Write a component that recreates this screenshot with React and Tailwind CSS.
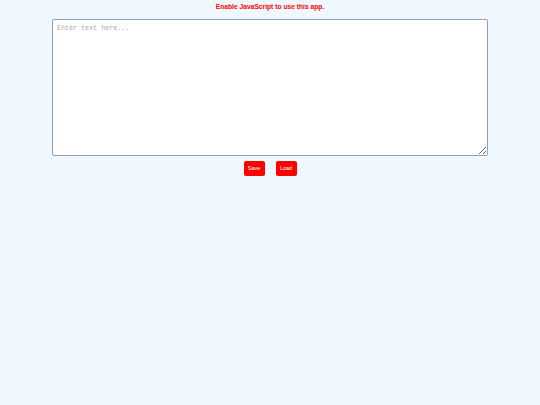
export default function App() {
  return (
    <div className="min-h-[405px] w-[540px] bg-[#f0f8ff] flex flex-col items-center" style={{ fontFamily: '"Liberation Sans", Arial, sans-serif' }}>
      <p className="text-[6.7px] font-bold text-[#ff0000] leading-none mt-[4px] h-[15px]">Enable JavaScript to use this app.</p>
      <textarea
        placeholder="Enter text here..."
        className="w-[436px] h-[137px] bg-white border border-[#9898c0] rounded-[2px] px-[4px] py-[4px] text-[6.7px] leading-[8px] outline-none placeholder:text-[#a9a9a9] resize-y"
        style={{ fontFamily: '"Liberation Mono", "Courier New", monospace' }}
      />
      <div className="flex gap-[11px] mt-[5px]">
        <button className="w-[21px] h-[15px] bg-[#ff0000] text-white text-[5.5px] rounded-[2px] flex items-center justify-center">Save</button>
        <button className="w-[21px] h-[15px] bg-[#ff0000] text-white text-[5.5px] rounded-[2px] flex items-center justify-center">Load</button>
      </div>
    </div>
  );
}
